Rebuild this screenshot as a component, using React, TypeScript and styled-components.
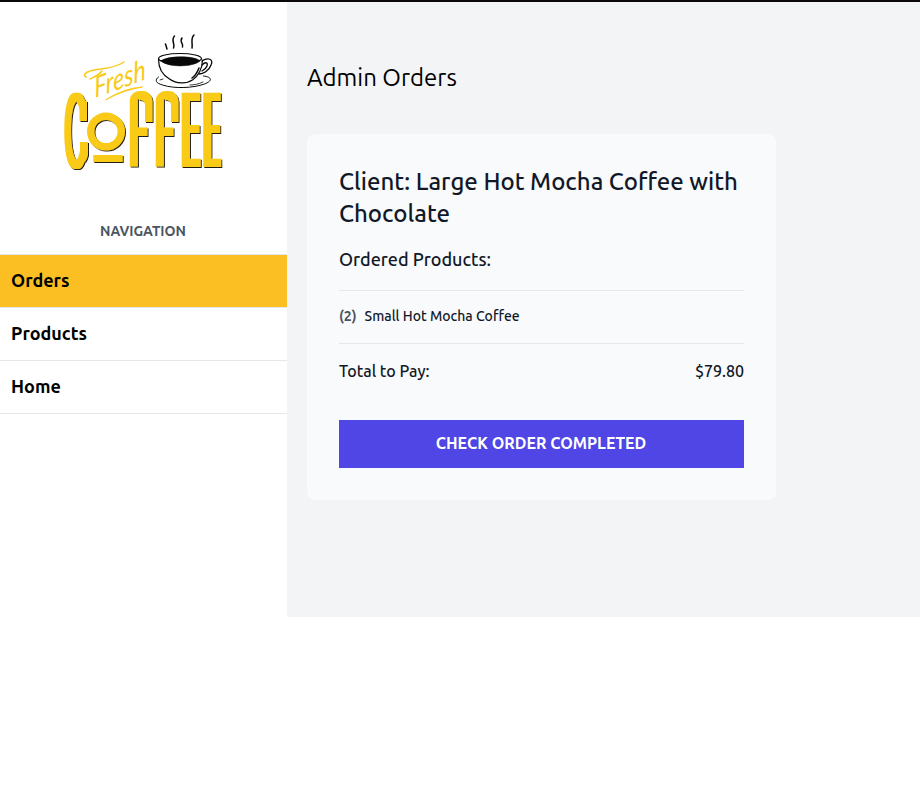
import React from "react";
import styled, { createGlobalStyle } from "styled-components";

const GlobalStyle = createGlobalStyle`
  *, *::before, *::after { box-sizing: border-box; }
  body {
    margin: 0;
    background: #fff;
    color: #000;
    font-family: Ubuntu, "Noto Sans", "Open Sans", sans-serif;
  }
  h1, h2, p, ul { margin: 0; padding: 0; }
`;

const Page = styled.div`
  border-top: 2px solid #0b0809;
`;

const Layout = styled.div`
  display: flex;
  height: 615px;
`;

const Sidebar = styled.aside`
  flex: 0 0 287px;
  padding-top: 28px;
`;

const LogoSvg = styled.svg`
  display: block;
  width: 161px;
  height: 144px;
  margin: 0 auto;
  overflow: visible;
`;

const NavTitle = styled.p`
  margin-top: 47px;
  height: 33px;
  padding-right: 1px;
  line-height: 20px;
  text-align: center;
  font-size: 14px;
  font-weight: 600;
  color: #4b5563;
`;

const Nav = styled.nav`
  border-top: 1px solid #e5e7eb;
`;

const NavItem = styled.a<{ $active?: boolean }>`
  display: block;
  height: 53px;
  padding: 11px;
  line-height: 28px;
  border-bottom: 1px solid #e5e7eb;
  background: ${(p) => (p.$active ? "#fbbf24" : "#fff")};
  color: #000;
  font-size: 18px;
  font-weight: 600;
  text-decoration: none;
`;

const Main = styled.main`
  flex: 1;
  padding: 60px 20px 0;
  background: #f3f4f6;
`;

const PageTitle = styled.h1`
  font-size: 24px;
  line-height: 32px;
  font-weight: 400;
`;

const Card = styled.section`
  width: 469px;
  height: 366px;
  margin-top: 40px;
  padding: 32px;
  border-radius: 8px;
  background: #f9fafb;
  color: #111827;
`;

const ClientName = styled.h2`
  font-size: 24px;
  line-height: 32px;
  font-weight: 500;
`;

const Subheading = styled.p`
  margin-top: 15px;
  font-size: 18px;
  line-height: 28px;
  font-weight: 500;
`;

const Products = styled.ul`
  margin-top: 17px;
  border-top: 1px solid #e5e7eb;
  list-style: none;
`;

const Product = styled.li`
  display: flex;
  gap: 8px;
  height: 53px;
  padding-top: 15px;
  border-bottom: 1px solid #e5e7eb;
  font-size: 14px;
  line-height: 20px;
  font-weight: 500;
`;

const Quantity = styled.span`
  font-weight: 700;
  color: #4b5563;
`;

const TotalRow = styled.div`
  display: flex;
  justify-content: space-between;
  margin-top: 15px;
  font-size: 16px;
  line-height: 24px;
  font-weight: 500;
`;

const CompleteButton = styled.button`
  display: block;
  width: 100%;
  height: 48px;
  margin-top: 37px;
  padding: 0 1px 2px 0;
  border: 0;
  background: #4f46e5;
  color: #fff;
  font: 600 16px Ubuntu, "Noto Sans", "Open Sans", sans-serif;
`;

const LogoText = styled.text`
  font-family: "Liberation Sans", Arial, sans-serif;
  font-size: 100px;
`;

const ScriptText = styled.text`
  font-family: Lato, sans-serif;
  font-style: italic;
  font-size: 28px;
  fill: #f9ca18;
`;

const Logo = () => (
  <LogoSvg viewBox="63 30 161 144" role="img" aria-label="Fresh Coffee">
    <defs>
      <filter id="heavy" filterUnits="userSpaceOnUse" x="55" y="80" width="175" height="95">
        <feMorphology operator="dilate" radius="3 0" />
      </filter>
      <filter id="medium" filterUnits="userSpaceOnUse" x="55" y="80" width="175" height="95">
        <feMorphology operator="dilate" radius="2 0" />
      </filter>
      <filter id="shade" filterUnits="userSpaceOnUse" x="55" y="80" width="175" height="95">
        <feDropShadow dx="1" dy="1" stdDeviation="0.25" floodColor="#211c12" />
      </filter>
      <clipPath id="archA"><rect x="129.5" y="91" width="23" height="110" rx="10" /></clipPath>
      <clipPath id="archB"><rect x="155.5" y="91" width="23" height="110" rx="10" /></clipPath>
    </defs>

    <g fill="#f9ca18" filter="url(#shade)">
      <g filter="url(#medium)">
        <LogoText transform="translate(64.700 167.5) scale(.3 1.08)">C</LogoText>
      </g>
      <path d="M79.500 101h7.500v20h-7.500zM80 142h8v13q-1 4-3 7l-5-6z" />
      <circle cx="106" cy="131.5" r="15.3" fill="none" stroke="#f9ca18" strokeWidth="7.4" />
      <path d="M93.300 155h29.400v7H93.300z" />
      <g clipPath="url(#archA)">
        <g filter="url(#heavy)">
          <LogoText transform="translate(130.6 167) scale(.25 1.1)">F</LogoText>
        </g>
        <path d="M139 91h14v31h-8v-17q0-5-6-5z" />
      </g>
      <g clipPath="url(#archB)">
        <g filter="url(#heavy)">
          <LogoText transform="translate(156.6 167) scale(.25 1.1)">F</LogoText>
        </g>
        <path d="M165 91h14v31h-8v-17q0-5-6-5z" />
      </g>
      <g filter="url(#heavy)">
        <LogoText transform="translate(182.800 167) scale(.24 1.08)">E</LogoText>
        <LogoText transform="translate(204.500 167) scale(.22 1.08)">E</LogoText>
      </g>
    </g>

    <ScriptText transform="translate(95 98) rotate(-20) skewX(-16) scale(.88 1)">
      Fresh
    </ScriptText>
    <g fill="none" stroke="#f9ca18" strokeLinecap="round">
      <path d="M86 77c-5-3 3-7 15-8 8-1 17-3 23-7M90 79c4-2 8-3 12-8" strokeWidth="1.500" />
      <path d="M105.500 100c9-6 22-12 37-13-13 2-25 6-37 13z" strokeWidth="1.2" />
    </g>

    <g fill="none" stroke="#080808" strokeLinecap="round" strokeLinejoin="round">
      <path d="M158.500 77c-4 3-3 6 4 8 12 4 31 3 42-1 8-3 8-7-1-8" strokeWidth="1" />
      <path d="M190 85c4 0 9-1 13-3M160 80l3-1" strokeWidth=".8" />
      <path d="M158.500 59c0 9 4 16 11 20 7 5 17 5 23 1 6-4 10-12 10-20" strokeWidth="1.2" />
      <ellipse cx="180" cy="58.500" rx="21.500" ry="5" strokeWidth="1.2" />
      <path d="M161 61c4-5 33-6 39 0-6 6-32 7-39 0z" fill="#080808" strokeWidth=".6" />
      <path d="M202 61c6-4 12-2 9 4-2 6-8 9-12 9M202 65c4-4 6-2 5 1-1 3-3 4-5 5" strokeWidth="1.3" />
      <path d="M199 68c-2 5-4 8-7 10" strokeWidth="1.500" />
      <path d="M165.500 44l1.500 5M174.500 36c-4 4 1 8-1 12M182 38c-3 4 2 6 .500 9M194 35c-4 4-1 8-2 13" strokeWidth="1.500" />
    </g>
  </LogoSvg>
);

const links = [
  { label: "Orders", active: true },
  { label: "Products" },
  { label: "Home" },
];

export default function App() {
  return (
    <>
      <GlobalStyle />
      <Page>
        <Layout>
          <Sidebar>
            <Logo />
            <NavTitle>NAVIGATION</NavTitle>
            <Nav>
              {links.map((l) => (
                <NavItem key={l.label} $active={l.active}>
                  {l.label}
                </NavItem>
              ))}
            </Nav>
          </Sidebar>
          <Main>
            <PageTitle>Admin Orders</PageTitle>
            <Card>
              <ClientName>Client: Large Hot Mocha Coffee with Chocolate</ClientName>
              <Subheading>Ordered Products:</Subheading>
              <Products>
                <Product>
                  <Quantity>(2)</Quantity>
                  <span>Small Hot Mocha Coffee</span>
                </Product>
              </Products>
              <TotalRow>
                <span>Total to Pay:</span>
                <span>$79.80</span>
              </TotalRow>
              <CompleteButton>CHECK ORDER COMPLETED</CompleteButton>
            </Card>
          </Main>
        </Layout>
      </Page>
    </>
  );
}
